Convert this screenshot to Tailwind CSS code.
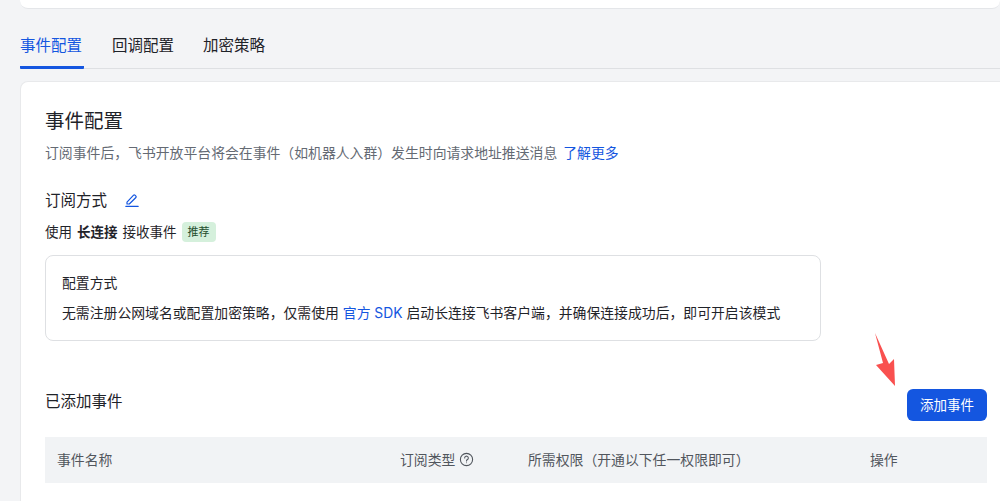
<!DOCTYPE html>
<html lang="zh-CN">
<head>
    <meta charset="UTF-8">
    <title>事件配置</title>
    <script src="https://cdn.jsdelivr.net/npm/@tailwindcss/browser@4"></script>
</head>
<body class="bg-[#f3f4f6] w-[1000px] h-[501px] overflow-hidden font-['Inter','Noto_Sans_CJK_SC',sans-serif] text-[#1f2329]">

    <!-- top card, cut off by the window -->
    <div class="h-[9px] ml-[20px] bg-white border-b border-[#e4e6e9] rounded-b-lg"></div>

    <!-- tabs -->
    <div class="ml-[20px] mt-[20px] h-[40px] flex items-start gap-[29px] border-b border-[#dee0e3] text-[15.5px] leading-[34px]">
        <div class="h-[40px] w-[64px] text-[#1456e0] border-b-[3px] border-[#1456e0] rounded-b-[1px] whitespace-nowrap">事件配置</div>
        <div class="whitespace-nowrap -ml-[1px]">回调配置</div>
        <div class="whitespace-nowrap">加密策略</div>
    </div>

    <!-- main card, runs past the right and bottom of the window -->
    <div class="ml-[20px] mt-[12px] w-[1000px] h-[420px] overflow-hidden bg-white border border-b-0 border-[#e8e9eb] rounded-t-lg pl-[24px] pt-[26px]">
        <h1 class="text-[19.5px] leading-[26px] font-normal">事件配置</h1>
        <p class="mt-[9px] text-[13.85px] leading-[20px] text-[#646a73]">订阅事件后，飞书开放平台将会在事件（如机器人入群）发生时向请求地址推送消息<span class="ml-[6px] text-[#1456e0]">了解更多</span></p>

        <div class="mt-[26px] flex items-center h-[24px]">
            <span class="text-[15.5px]">订阅方式</span>
            <svg class="ml-[18px] -mt-[2px]" width="14" height="14" viewBox="0 0 14 14" fill="none" stroke="#1456e0" stroke-width="1.2" stroke-linejoin="round" stroke-linecap="round">
                <path d="M2 9.200 8.600 2.200a.9.9 0 0 1 1.300 0l1 1a.9.9 0 0 1 0 1.300L4.300 11H2z"/>
                <path d="M.8 13.300h12.400"/>
            </svg>
        </div>

        <div class="mt-[9px] flex items-center text-[13.5px] leading-[20px] h-[20px]">
            <span>使用</span>
            <span class="ml-[5px] font-semibold">长连接</span>
            <span class="ml-[5px]">接收事件</span>
            <span class="ml-[5px] px-[6px] h-[20px] rounded-[4px] bg-[#d5f0dc] text-[11px] leading-[20px] text-[#1f4d2c]">推荐</span>
        </div>

        <div class="mt-[13px] w-[776px] h-[86px] border border-[#dee0e3] rounded-lg px-[16px] pt-[17px] text-[13.85px] leading-[20px]">
            <div>配置方式</div>
            <p class="mt-[10px] whitespace-nowrap">无需注册公网域名或配置加密策略，仅需使用 <span class="text-[#1456e0]">官方 SDK</span> 启动长连接飞书客户端，并确保连接成功后，即可开启该模式</p>
        </div>

        <div class="relative mt-[47px] w-[942px] h-[34px] flex items-center justify-between">
            <span class="mb-[6px] text-[15.5px]">已添加事件</span>
            <button class="w-[80px] h-[32px] bg-[#1456e0] text-white text-[13.5px] rounded-[6px]">添加事件</button>
            <!-- red annotation arrow -->
            <svg class="absolute left-[828px] top-[-56px]" width="24" height="56" viewBox="0 0 24 56">
                <path d="M2 1 16 32 21 27 22 54 3 33 10 31z" fill="#f9504f"/>
            </svg>
        </div>

        <div class="mt-[15px] w-[942px] h-[46px] bg-[#f1f3f5] flex items-center text-[13.85px] text-[#51565d]">
            <span class="ml-[12px] w-[343px]">事件名称</span>
            <span class="w-[128px] flex items-center">订阅类型
                <svg class="ml-[4px]" width="15" height="15" viewBox="0 0 14 14" fill="none" stroke="#51565d" stroke-width="1">
                    <circle cx="7" cy="7" r="5.700"/>
                    <path d="M5.300 5.600a1.700 1.700 0 1 1 2.600 1.400c-.6.4-.9.7-.9 1.300" stroke-linecap="round"/>
                    <path d="M7 9.800v.6"/>
                </svg>
            </span>
            <span class="w-[342px]">所需权限（开通以下任一权限即可）</span>
            <span>操作</span>
        </div>
    </div>

</body>
</html>
